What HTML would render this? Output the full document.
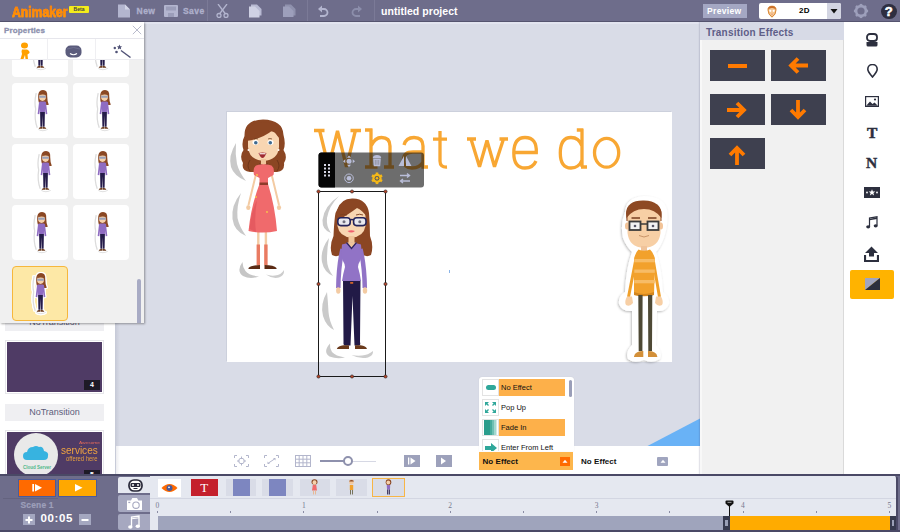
<!DOCTYPE html>
<html><head><meta charset="utf-8">
<style>
*{margin:0;padding:0;box-sizing:border-box}
html,body{width:900px;height:532px;overflow:hidden;background:#d9dce7;font-family:"Liberation Sans",sans-serif}
.a{position:absolute}
#top{left:0;top:0;width:900px;height:22px;background:#6e6d8b;border-bottom:1px solid #55546f}
.sep{position:absolute;top:0;width:1px;height:21px;background:#7b7a97}
.tb{color:#aeb0cb;font-weight:bold;font-size:9px;-webkit-text-stroke:0.3px #aeb0cb}
#side{left:0;top:22px;width:115px;height:452px;background:#fff}
.notr{position:absolute;left:5px;width:99px;height:17px;background:#efeff2;color:#5d5d7a;font-size:9px;text-align:center;line-height:17px}
#canvasbg{left:116px;top:22px;width:584px;height:425px;background:#d9dce7}
#stage{left:227px;top:112px;width:445px;height:250px;background:#fff;box-shadow:-1px -1px 0 #ccd0dc}
#toolbar{left:116px;top:446px;width:584px;height:28px;background:#fff}
#rpanel{left:700px;top:22px;width:144px;height:452px;background:#f1f1f1;border-right:1px solid #dadada;box-shadow:-1px 0 1px rgba(60,60,100,.14)}
#rhead{left:0;top:0;width:144px;height:18px;background:#d7dae6;color:#5f5e88;font-weight:bold;font-size:10px;line-height:18px;padding-top:1.5px;padding-left:6px;letter-spacing:0.2px}
.eff{position:absolute;width:55px;height:31px;background:#3e404f}
#ricons{left:844px;top:22px;width:56px;height:452px;background:#fff}
#tl{left:0;top:474px;width:900px;height:58px;background:#6e6d8b}
#props{left:0;top:22px;width:144px;height:301px;background:#f0f0f0;box-shadow:1px 1px 2px rgba(0,0,0,.35)}
.card{position:absolute;width:56px;height:55px;background:#fff;border-radius:4px}
</style></head><body>
<svg width="0" height="0" style="position:absolute"><defs>
<symbol id="sw" viewBox="0 0 18 40">
  <path d="M3 3 Q1 12 2.5 18 Q1 28 4 36" fill="none" stroke="#dcdcdc" stroke-width="1.2"/>
  <path d="M5 37.5 Q9 40 14 37.5" fill="none" stroke="#dedede" stroke-width="1"/>
  <path d="M5 4 Q6 0 9.5 0 Q14 0 13.5 6 Q13.5 11 15 14 Q12 15 11 13 L6 13 Q4.5 10 5 4Z" fill="#8a4723"/>
  <ellipse cx="9" cy="6.5" rx="3.3" ry="3.9" fill="#f6d1ab"/>
  <path d="M5.6 5 Q7 1.5 10 2 Q12.5 2.5 12.6 5.5 Q10 3.5 5.6 5Z" fill="#8a4723"/>
  <rect x="5.8" y="5.4" width="6.4" height="2" fill="#9aa0b8"/>
  <path d="M6.5 11.5 L5.2 23 M11.5 11.5 L12.8 23" stroke="#8f6cc2" stroke-width="1.6"/>
  <path d="M6.3 11 H11.7 L11.3 21 H6.7Z" fill="#8f6cc2"/>
  <path d="M6.7 21 H11.3 L11 35 H9.3 L9 24 L8.7 35 H7Z" fill="#251c4a"/>
  <path d="M5.5 36.5 Q6 35 8.8 35 V36.8 H5.5Z M12.5 36.5 Q12 35 9.2 35 V36.8 H12.5Z" fill="#6a3a1c"/>
</symbol>
</defs></svg>
<!-- TOP BAR -->
<div id="top" class="a">
  <div class="a" style="left:11.5px;top:3.5px;font-size:14px;font-weight:bold;transform:scaleX(0.87);transform-origin:0 0;background:linear-gradient(#ff7c00,#ff9200 60%,#ffa300);-webkit-background-clip:text;color:transparent;-webkit-text-stroke:0.6px #ff8a10;line-height:17px">Animaker</div>
  <div class="a" style="left:69px;top:6px;width:20px;height:7px;background:#f4ec1c;border-radius:1px;font-size:5px;font-weight:bold;color:#444;text-align:center;line-height:7px">Beta</div>
  <svg class="a" style="left:117px;top:4px" width="14" height="14" viewBox="0 0 14 14"><path d="M1 0.5 H8 L13 5.5 V13.5 H1 Z" fill="#b3b5cf"/><path d="M8 0.5 V5.5 H13" fill="#d2d4e6"/></svg>
  <div class="a tb" style="left:136.5px;top:5.5px;font-size:8.5px;letter-spacing:0.5px">New</div>
  <svg class="a" style="left:164px;top:5px" width="14" height="12" viewBox="0 0 14 12"><rect x="0" y="0" width="14" height="12" rx="1" fill="#b3b5cf"/><rect x="2" y="1.5" width="10" height="4" fill="#9b9db9"/><rect x="4" y="8" width="6" height="4" fill="#9b9db9"/></svg>
  <div class="a tb" style="left:183px;top:5.5px;font-size:8.5px;letter-spacing:0.45px">Save</div>
  <div class="sep" style="left:207px"></div>
  <svg class="a" style="left:216px;top:4px" width="13" height="14" viewBox="0 0 13 14"><g stroke="#b3b5cf" stroke-width="1.3" fill="none"><path d="M2 0 L9.5 10"/><path d="M11 0 L3.5 10"/><circle cx="3" cy="11.5" r="2"/><circle cx="10" cy="11.5" r="2"/></g></svg>
  <svg class="a" style="left:248px;top:4px" width="15" height="14" viewBox="0 0 15 14"><path d="M3 0.5 H9 L13.5 5 V11.5 H3 Z" fill="#b8bad3"/><path d="M1 2.5 H7 L11.5 7 V13.5 H1 Z" fill="#cfd1e4"/></svg>
  <svg class="a" style="left:282px;top:4px" width="14" height="14" viewBox="0 0 14 14"><path d="M3 0.5 H9 L13.5 5 V11.5 H3 Z" fill="#8f91ad"/><path d="M1 2.5 H7 L11.5 7 V13 H1 Z" fill="#9d9fbb"/></svg>
  <div class="sep" style="left:307px"></div>
  <svg class="a" style="left:318px;top:5px" width="11" height="13" viewBox="0 0 11 13"><g fill="none" stroke="#b3b5cf" stroke-width="1.8"><path d="M1.5 4 H6 A3.5 3.5 0 0 1 6 11 H2"/></g><path d="M0 4 L4 0.5 V7.5 Z" fill="#b3b5cf"/></svg>
  <svg class="a" style="left:351px;top:5px" width="11" height="13" viewBox="0 0 11 13"><g fill="none" stroke="#8c8eab" stroke-width="1.8"><path d="M9.5 4 H5 A3.5 3.5 0 0 0 5 11 H9"/></g><path d="M11 4 L7 0.5 V7.5 Z" fill="#8c8eab"/></svg>
  <div class="sep" style="left:374px"></div>
  <div class="a" style="left:381px;top:4.5px;font-size:10.5px;font-weight:bold;color:#fff;letter-spacing:0.05px">untitled project</div>
  <div class="a" style="left:703px;top:4px;width:44px;height:14px;background:#a4a7c3;color:#fff;font-weight:bold;font-size:8.5px;line-height:14px;padding-left:4px;letter-spacing:0.35px">Preview</div>
  <div class="a" style="left:759px;top:3px;width:82px;height:16px;background:#fff;border-radius:2px;overflow:hidden">
    <svg class="a" style="left:8px;top:2px" width="10" height="13" viewBox="0 0 10 13"><path d="M1 5 Q0.8 1.2 5 1.2 Q9.2 1.2 9 5 Q9 9.5 5 12.2 Q1 9.5 1 5Z" fill="#f5c692" stroke="#d9852f" stroke-width="1"/><path d="M1 4.5 Q1.5 1 5 1 Q8.5 1 9 4.5 Q7 2.8 5 3 Q3 2.8 1 4.5Z" fill="#c9702a"/><circle cx="3.3" cy="5.8" r="1.1" fill="#fff"/><circle cx="6.7" cy="5.8" r="1.1" fill="#fff"/><path d="M4 9 Q5 9.6 6 9" stroke="#e08a70" stroke-width="0.6" fill="none"/></svg>
    <div class="a" style="left:40px;top:3px;font-size:8px;font-weight:bold;color:#000;letter-spacing:0.3px">2D</div>
    <div class="a" style="left:68px;top:0;width:14px;height:16px;background:#d3d5e2"></div>
    <svg class="a" style="left:71px;top:5px" width="8" height="6"><path d="M0.5 1 H7.5 L4 5.5 Z" fill="#111"/></svg>
  </div>
  <svg class="a" style="left:853px;top:3px" width="16" height="16" viewBox="0 0 16 16"><g fill="#9d9fbb"><rect x="6.7" y="0.9" width="2.6" height="3" transform="rotate(0 8 8)"/><rect x="6.7" y="0.9" width="2.6" height="3" transform="rotate(45 8 8)"/><rect x="6.7" y="0.9" width="2.6" height="3" transform="rotate(90 8 8)"/><rect x="6.7" y="0.9" width="2.6" height="3" transform="rotate(135 8 8)"/><rect x="6.7" y="0.9" width="2.6" height="3" transform="rotate(180 8 8)"/><rect x="6.7" y="0.9" width="2.6" height="3" transform="rotate(225 8 8)"/><rect x="6.7" y="0.9" width="2.6" height="3" transform="rotate(270 8 8)"/><rect x="6.7" y="0.9" width="2.6" height="3" transform="rotate(315 8 8)"/></g><circle cx="8" cy="8" r="4.9" fill="none" stroke="#9d9fbb" stroke-width="2.6"/></svg>
  <div class="a" style="left:881px;top:3.5px;width:15.5px;height:15.5px;border-radius:50%;background:#2e2e40;color:#fff;font-weight:bold;font-size:13px;line-height:16px;text-align:center;-webkit-text-stroke:0.6px #fff">?</div>
</div>

<!-- SIDEBAR -->
<div id="side" class="a">
  <div class="notr" style="top:292px">NoTransition</div>
  <div class="a" style="left:5px;top:318px;width:99px;height:54px;background:#fff;border:1px solid #e6e6ea"></div>
  <div class="a" style="left:7px;top:320px;width:95px;height:50px;background:#4f3b65"></div>
  <div class="a" style="left:84px;top:358px;width:16px;height:10px;background:#1e1a26;color:#fff;font-size:7px;font-weight:bold;text-align:center;line-height:10px">4</div>
  <div class="notr" style="top:382px">NoTransition</div>
  <div class="a" style="left:5px;top:408px;width:99px;height:54px;background:#fff;border:1px solid #e6e6ea"></div>
  <div class="a" style="left:7px;top:409.5px;width:95px;height:50px;background:#4f3b65;overflow:hidden">
    <div class="a" style="left:7px;top:1px;width:44px;height:44px;border-radius:50%;background:#e9e9e9"></div>
    <svg class="a" style="left:16px;top:13px" width="26" height="16" viewBox="0 0 26 16"><path d="M4 15 Q0 15 0 11 Q0 7 4 7 Q5 2 10 2 Q13 0 16 2 Q20 1 21 6 Q26 7 25 11 Q25 15 21 15Z" fill="#37b3e0"/></svg>
    <div class="a" style="left:16px;top:33px;font-size:4.5px;font-weight:bold;color:#4fb88a;white-space:nowrap">Cloud Server</div>
    <div class="a" style="left:72px;top:8.5px;font-size:4px;color:#e66a5a;transform:scaleX(1.2);transform-origin:0 0">Awesome</div>
    <div class="a" style="left:54px;top:12.5px;font-size:11.5px;color:#f0a440;line-height:12px;transform:scaleX(0.87);transform-origin:0 0">services</div>
    <div class="a" style="left:59px;top:23.5px;font-size:6.5px;color:#e8a040;line-height:7px;transform:scaleX(0.9);transform-origin:0 0">offered here</div>
    <div class="a" style="left:77px;top:38px;width:16px;height:10px;background:#1e1a26;color:#fff;font-size:7px;font-weight:bold;text-align:center;line-height:10px">5</div>
  </div>
</div>

<div id="canvasbg" class="a"></div>
<div class="a" style="left:116px;top:22px;width:584px;height:2px;background:#e2e4ef"></div>
<div id="stage" class="a"></div>
<div id="toolbar" class="a">
  <svg class="a" style="left:118px;top:9px" width="15" height="12" viewBox="0 0 15 12"><g stroke="#b3b6cc" stroke-width="1" fill="none"><path d="M0.5 3 V0.5 H3 M12 0.5 H14.5 V3 M14.5 9 V11.5 H12 M3 11.5 H0.5 V9"/><circle cx="7.5" cy="6" r="2.8"/><path d="M7.5 1.5 V4 M7.5 8 V10.5 M3 6 H5.5 M9.5 6 H12"/></g></svg>
  <svg class="a" style="left:148px;top:9px" width="15" height="12" viewBox="0 0 15 12"><g stroke="#b3b6cc" stroke-width="1" fill="none"><path d="M0.5 3 V0.5 H3 M12 0.5 H14.5 V3 M14.5 9 V11.5 H12 M3 11.5 H0.5 V9"/><path d="M4.5 8 L10.5 4"/></g><path d="M9 3 H11.5 V5.5Z M6 9 H3.5 V6.5Z" fill="#b3b6cc"/></svg>
  <svg class="a" style="left:179px;top:9px" width="16" height="12" viewBox="0 0 16 12"><g stroke="#b3b6cc" stroke-width="1" fill="none"><rect x="0.5" y="0.5" width="15" height="11"/><path d="M0.5 4.2 H15.5 M0.5 7.8 H15.5 M4.2 0.5 V11.5 M8 0.5 V11.5 M11.8 0.5 V11.5"/></g></svg>
  <div class="a" style="left:204px;top:14px;width:27px;height:2px;background:#8e91ad"></div>
  <div class="a" style="left:231px;top:14.5px;width:29px;height:1px;background:#d6d8e4"></div>
  <div class="a" style="left:227px;top:9.5px;width:10px;height:10px;border-radius:50%;border:2.5px solid #8e91ad;background:#fff"></div>
  <div class="a" style="left:288px;top:8.5px;width:16px;height:12.5px;background:#9da1bb"></div>
  <svg class="a" style="left:291px;top:10px" width="10" height="10" viewBox="0 0 10 10"><rect x="1" y="1.5" width="1.3" height="7" fill="#fff"/><path d="M3.5 1.5 L8.5 5 L3.5 8.5Z" fill="#fff"/></svg>
  <div class="a" style="left:319.5px;top:8.5px;width:16px;height:12.5px;background:#9da1bb"></div>
  <svg class="a" style="left:322px;top:10px" width="10" height="10" viewBox="0 0 10 10"><path d="M3 1.5 L8 5 L3 8.5Z" fill="#fff"/></svg>
  <div class="a" style="left:363px;top:6px;width:94px;height:18px;background:#fdb64c"></div>
  <div class="a" style="left:366.5px;top:10.5px;font-size:8px;font-weight:bold;color:#111;letter-spacing:0.05px">No Effect</div>
  <div class="a" style="left:443.5px;top:11px;width:10.5px;height:8.5px;background:#ff6b00"></div>
  <svg class="a" style="left:445px;top:12px" width="8" height="6"><path d="M1.5 4.8 H6.5 L4 1.8Z" fill="#fff"/></svg>
  <div class="a" style="left:465px;top:10.5px;font-size:8px;font-weight:bold;color:#111;letter-spacing:0.05px">No Effect</div>
  <div class="a" style="left:541px;top:11px;width:10.5px;height:8.5px;background:#a0a5bf;border-radius:1px"></div>
  <svg class="a" style="left:542.5px;top:12px" width="8" height="6"><path d="M1.5 4.8 H6.5 L4 1.8Z" fill="#fff"/></svg>
</div>
<svg class="a" style="left:0;top:0" width="900" height="532" viewBox="0 0 900 532">
<defs>
  <filter id="stk" x="-20%" y="-20%" width="140%" height="140%"><feDropShadow dx="-0.8" dy="1" stdDeviation="0.9" flood-color="#000" flood-opacity="0.28"/></filter>
  <clipPath id="stclip"><rect x="116" y="22" width="584" height="424"/></clipPath>
</defs>
<g clip-path="url(#stclip)">
<!-- title -->
<g fill="none" stroke="#f8a733" stroke-width="3.3">
  <path stroke-linejoin="bevel" d="M319.5 130 L328.5 166.8 L337.5 131 L346.5 166.8 L355.5 130"/>
  <path d="M314 130.5 H324.5 M350.5 130.5 H361"/>
  <path d="M371 129 V167 M365 130 H372.5 M371 146 Q375 137.5 381.5 137.5 Q390 137.5 390 146 V167 M365 167 H377.5 M384 167 H394"/>
  <path d="M404 145 Q406 137.5 414 137.5 Q423 137.5 423 146 V167 H428 M423 152 H413 Q403.5 152 403.5 160 Q403.5 168 412 168 Q420 168 423 162"/>
  <path d="M440 131 V161 Q440 167.5 447 167 M433 139.2 H447"/>
  <path stroke-linejoin="bevel" d="M471 139 L479.5 166.8 L487 140.5 L494.5 166.8 L503.5 139 M467 139 H476 M499.5 139 H508"/>
  <path d="M514 152.5 H536.3 Q537 137.5 525 137.5 Q513.8 137.5 513.8 153 Q513.8 168 525 168 Q533 168 536 161"/>
  <path d="M582 146 Q579 137.5 571 137.5 Q560.3 137.5 560.3 153 Q560.3 168 571 168 Q579 168 582 160 M582 129 V167 M576.8 130 H583.4 M581 167 H587"/>
  <ellipse cx="606.6" cy="152.8" rx="12.1" ry="14.4"/>
</g>

<!-- woman 1 (red dress) -->
<g>
  <path d="M236 143 Q228 156 231 167 Q234 176 246 181 Q239 172 237 164 Q235 154 236 143Z" fill="#c9c9c9"/>
  <path d="M241 193 Q231 205 232.5 219 Q234 231 246 236 Q239 226 237.5 218 Q236.5 206 241 193Z" fill="#c9c9c9"/>
  <path d="M242.5 262 Q236 271 243 276 Q250 279.5 259 276.5 Q249 275.5 245.5 271 Q242.5 267 242.5 262Z" fill="#c6c6c6"/>
  <path d="M266 274.5 Q272 279 279 277.5 Q284.5 275.5 284 270 Q281 275 275 275.5 Q270 276 266 274.5Z" fill="#cdcdcd"/>
  <!-- hair back -->
  <path d="M244.5 136 Q244 120 263 119.5 Q283 120 283.5 135 Q286 144 283.5 150 Q288 157 284 163 Q285 171 277 172 L250 172 Q241 171 243 163 Q239 156 243.5 150 Q241 143 244.5 136Z" fill="#8b4623"/>
  <!-- face -->
  <path d="M248 139 Q248 131 263.5 130 Q279 131 279 139 L279 147 Q278 160 263.5 161 Q249 160 248 147Z" fill="#f8d6b2"/>
  <!-- bangs -->
  <path d="M246 141 Q245 124 262 122 Q279 122 282 136 L282 141 Q277 136 273 130 Q262 139 246 141Z" fill="#8b4623"/>
  <path d="M250 160 Q246 166 250 171 M277 160 Q281 166 277 171" stroke="#6e3519" stroke-width="1" fill="none"/>
  <ellipse cx="255.5" cy="142.5" rx="3" ry="2.4" fill="#fff"/>
  <ellipse cx="270.5" cy="142.5" rx="3" ry="2.4" fill="#fff"/>
  <circle cx="255.8" cy="142.7" r="1.8" fill="#3f6a8e"/>
  <circle cx="270.3" cy="142.7" r="1.8" fill="#3f6a8e"/>
  <path d="M254 139 Q256 138 258 139 M268 139 Q270 138 272 139" stroke="#6a3a1c" stroke-width="0.7" fill="none"/>
  <path d="M258.5 153 Q262.5 152 266.5 153 Q264.5 158 262.5 158 Q260.5 158 258.5 153Z" fill="#9e2a33"/>
  <path d="M259.5 153.2 H265.5 V154.3 H259.5Z" fill="#fff"/>
  <circle cx="248.5" cy="150" r="1" fill="#fff"/><circle cx="278.5" cy="150" r="1" fill="#fff"/>
  <rect x="261" y="159" width="5" height="7" fill="#efc59b"/>
  <path d="M259 164 Q263.5 167 268 164" stroke="#4a2a1a" stroke-width="0.8" fill="none"/>
  <!-- arms -->
  <path d="M256.5 172 L248.5 205 M271 172 L279 205" stroke="#f3cba3" stroke-width="2"/>
  <ellipse cx="248.3" cy="207.5" rx="2.1" ry="2.6" fill="#f3cba3"/><ellipse cx="279" cy="207.5" rx="2.1" ry="2.6" fill="#f3cba3"/>
  <!-- legs -->
  <path d="M258.3 230 V266 M265.9 230 V266" stroke="#f3cba3" stroke-width="2.4"/>
  <path d="M258.3 244.5 V265 M265.9 244.5 V265" stroke="#e97b62" stroke-width="3.4"/>
  <path d="M248.5 268 Q251 265 260 265 V269 H248.5Z M276.5 268 Q274 265 264.5 265 V269 H276.5Z" fill="#5b2b14"/>
  <!-- dress -->
  <path d="M256 165.5 Q263.5 163 271.5 165.5 Q275 168 273.5 175 L268 178 L268 184 Q275 206 277 231 Q263 234 248.5 231 Q251 206 259.5 184 L259.5 178 L254 175 Q252.5 168 256 165.5Z" fill="#f06a6c"/>
  <path d="M249.5 229 Q251 212 257 200 Q254 218 256 232Z" fill="#e55a60"/>
  <rect x="259.5" y="182.5" width="8.5" height="2.5" fill="#8e3b2b"/>
  <circle cx="257" cy="175" r="0.9" fill="#f8c84a"/><circle cx="256" cy="197" r="0.9" fill="#f8c84a"/><circle cx="267" cy="212" r="0.9" fill="#f8c84a"/>
</g>

<!-- woman 2 (selected, purple) -->
<g>
  <path d="M339 196 Q324 206 322.5 220 Q322 230 331 233 Q326 226 327 218 Q329 206 339 196Z" fill="#cacaca"/>
  <path d="M329 238 Q320 250 322 262 Q324 272 333 276 Q327 268 327 260 Q327 248 329 238Z" fill="#cacaca"/>
  <path d="M327 292 Q320 304 323 316 Q326 326 334 330 Q329 320 328.5 312 Q328 302 327 292Z" fill="#cacaca"/>
  <path d="M330 343.5 Q322.5 352 329.5 356.5 Q337 359.5 345 357.5 Q335.5 356 332 352 Q329.5 348 330 343.5Z" fill="#c9c9c9"/>
  <path d="M351.5 355 Q360 359.5 368 357.5 Q373.5 355.5 373 351 Q368 355 362 355.5 Q356.5 356 351.5 355Z" fill="#cdcdcd"/>
  <!-- hair -->
  <path d="M337 210 Q341 198 353 198.5 Q367 199 369 213 Q370 226 370 236 Q374 246 371 255 Q366 258 360 253 L344 253 Q337 258 332 255 Q329 246 333.5 236 Q334 224 335 216 Q335.5 212 337 210Z" fill="#8b4623"/>
  <path d="M337.5 216 Q338.5 207 351.5 207 Q364.5 207 365.5 216 L365.5 226 Q363.5 237 351.5 237.5 Q339.5 237 337.5 226Z" fill="#f8d6b2"/>
  <path d="M335.5 222 Q335 202 352 200.5 Q368 201 367 217 Q362 210 357 208 Q349 214 335.5 222Z" fill="#8b4623"/>
  <path d="M340 215 Q343.5 213.5 347 215 M356 215 Q359.5 213.5 363 215" stroke="#7a3f1e" stroke-width="0.9" fill="none"/>
  <rect x="337.8" y="217.8" width="12.4" height="7.8" rx="3" fill="#e9e9ef" stroke="#25245a" stroke-width="1.6"/>
  <rect x="353.6" y="217.8" width="12.4" height="7.8" rx="3" fill="#e9e9ef" stroke="#25245a" stroke-width="1.6"/>
  <path d="M350 220 Q352 219 353.6 220" stroke="#25245a" stroke-width="1.4" fill="none"/>
  <circle cx="344" cy="221.7" r="1.5" fill="#707080"/><circle cx="359.8" cy="221.7" r="1.5" fill="#707080"/>
  <path d="M347.5 231 Q351.3 229.5 355 231 Q351.3 234 347.5 231Z" fill="#ef5f6e"/>
  <rect x="348.5" y="236" width="6" height="8" fill="#efc59b"/>
  <!-- arms -->
  <path d="M342.5 249 Q338.5 266 338.3 288 M360.5 249 Q364.5 266 364.8 288" stroke="#9173c6" stroke-width="4.5" fill="none"/>
  <ellipse cx="338.3" cy="290.5" rx="2.2" ry="3.2" fill="#f3cba3"/><ellipse cx="365" cy="290.5" rx="2.2" ry="3.2" fill="#f3cba3"/>
  <!-- jeans -->
  <path d="M343 280 H360.5 L360 342 Q361 345.5 358.5 345.5 H354.5 L352.5 296 L350.5 345.5 H345.5 Q343 345.5 343.5 342Z" fill="#221a47"/>
  <path d="M336.8 349 Q338 346 343.5 345.3 H349 V349Z M367 349 Q366 346 360.5 345.3 H355 V349Z" fill="#6a3a1c"/>
  <!-- sweater -->
  <path d="M342 244.5 Q351.5 241 361 244.5 Q362 254 360.5 260 Q358 264 358 267 Q360 274 361 281 H342 Q343 274 345 267 Q345 264 342.5 260 Q341 254 342 244.5Z" fill="#9173c6"/>
  <path d="M346.5 242.5 L351.5 248.5 L356.5 242.5" stroke="#2f2563" stroke-width="1.3" fill="#efc59b"/>
  <rect x="350.2" y="282" width="3" height="1.8" fill="#d0632a"/>
</g>

<!-- man -->
<g>
  <path filter="url(#stk)" d="M625 212 Q626 197 644 196 Q664 196 667 210 Q669 222 664 238 Q660 248 656 252 Q662 268 663 292 Q670 296 669 304 Q666 312 657 311 L656 345 Q663 352 660 359 Q652 364 644 360 Q634 364 628 359 Q625 352 632 345 L632 311 Q622 312 619 304 Q618 296 625 292 Q626 268 632 252 Q626 246 623 238 Q620 224 625 212Z" fill="#fff"/>
    <path d="M626 213 Q627 200 644 200.5 Q661 201 661.5 214 L661.5 221 L626.5 221Z" fill="#8e4a24"/>
  <path d="M627.5 214 Q629 206 644 206 Q659 206 660.5 214 L660.5 233 Q659 247 644 248 Q629 247 627.5 233Z" fill="#f7cfa5"/>
  <path d="M626.5 211 Q631 202 644 202 Q659 202 661.5 212 L661.5 218 Q655 209 644 209 Q633 209 626.5 218Z" fill="#8e4a24"/>
  <ellipse cx="627" cy="226" rx="2" ry="3.5" fill="#f2c397"/><ellipse cx="661" cy="226" rx="2" ry="3.5" fill="#f2c397"/>
  <path d="M631.5 218 H640 M648 218 H656.5" stroke="#7a4020" stroke-width="1.7"/>
  <rect x="629.5" y="221.5" width="11" height="8.5" fill="#f2f2f2" stroke="#3b3b3b" stroke-width="1.8"/>
  <rect x="647.5" y="221.5" width="11" height="8.5" fill="#f2f2f2" stroke="#3b3b3b" stroke-width="1.8"/>
  <path d="M640.5 224 H647.5" stroke="#3b3b3b" stroke-width="1.5"/>
  <circle cx="635" cy="226" r="1.3" fill="#556"/><circle cx="653" cy="226" r="1.3" fill="#556"/>
  <path d="M639 235.5 Q644 238.5 649 235.5" stroke="#c9956a" stroke-width="1" fill="none"/>
  <rect x="641" y="246" width="6" height="5" fill="#f0c39a"/>
  <path d="M636.5 256 L628.5 297 M652.5 256 L659.5 297" stroke="#f0a02a" stroke-width="3"/>
  <path d="M627 296.5 Q624 302 626 305 Q630 307 633 303 L632 296.5Z M661 296.5 Q664 302 662 305 Q658 307 655 303 L656 296.5Z" fill="#f7cfa5"/>
  <path d="M638.5 249.5 Q644 252 650 249.5 Q655 254 655 262 L654 295 Q644 297 634 295 L634 262 Q634 254 638.5 249.5Z" fill="#f2a12c"/>
  <rect x="634.3" y="259" width="20.5" height="3.3" fill="#f7bc66"/>
  <rect x="634.3" y="269.5" width="20.5" height="3.3" fill="#f7bc66"/>
  <rect x="634.3" y="280" width="20.5" height="3.3" fill="#f7bc66"/>
  <path d="M634 292 Q644 296 654 292 L654 295 Q644 297.5 634 295Z" fill="#d4861e"/>
  <path d="M638.3 295 H642.6 L642.4 351 H638.7Z M648 295 H652.3 L652 351 H648.3Z" fill="#4e4935"/>
  <path d="M634 356.5 Q635 351 643.3 351 V357 H634Z M657.3 356.5 Q656.5 351 648 351 V357 H657.3Z" fill="#d39039"/>
</g>

<path d="M647.5 446 L700 418.5 V446Z" fill="#69b2f6"/>
<!-- small dot -->
<rect x="449" y="270" width="1" height="3" fill="#8ab4e8"/>

<!-- selection box -->
<rect x="318.5" y="191.5" width="67" height="185" fill="none" stroke="#1a1a1a" stroke-width="1"/>
<g fill="#b5452a" stroke="#222" stroke-width="0.6">
  <circle cx="318.5" cy="191.5" r="1.6"/><circle cx="352" cy="191.5" r="1.6"/><circle cx="385.5" cy="191.5" r="1.6"/>
  <circle cx="318.5" cy="284" r="1.6"/><circle cx="385.5" cy="284" r="1.6"/>
  <circle cx="318.5" cy="376.5" r="1.6"/><circle cx="352" cy="376.5" r="1.6"/><circle cx="385.5" cy="376.5" r="1.6"/>
</g>

<!-- floating toolbar -->
<rect x="318.5" y="152.5" width="105.5" height="35" rx="3" fill="rgba(20,20,20,0.62)"/>
<path d="M321.5 152.5 H335 V187.5 H321.5 Q318.5 187.5 318.5 184.5 V155.5 Q318.5 152.5 321.5 152.5Z" fill="#050505"/>
<g fill="#d8d8e6">
  <rect x="324" y="164" width="2" height="2"/><rect x="328" y="164" width="2" height="2"/>
  <rect x="324" y="167.5" width="2" height="2"/><rect x="328" y="167.5" width="2" height="2"/>
  <rect x="324" y="171" width="2" height="2"/><rect x="328" y="171" width="2" height="2"/>
  <rect x="324" y="174.5" width="2" height="2"/><rect x="328" y="174.5" width="2" height="2"/>
</g>
<g fill="#b9bdd8">
  <circle cx="349" cy="161.3" r="2.5"/>
  <path d="M349 155.5 L351 157.8 H347Z M349 167 L351 164.8 H347Z M343 161.3 L345.3 159.3 V163.3Z M355 161.3 L352.7 159.3 V163.3Z"/>
  <path d="M373.2 158.6 H380.8 L380.2 166.3 H373.8Z"/><path d="M372.8 158 Q373 155 377 155 Q381 155 381.2 158Z"/><path d="M375.3 160 V164.8 M377 160 V164.8 M378.7 160 V164.8" stroke="#7a7a80" stroke-width="0.6"/>
  <path d="M404 156 V166 H398.5Z M406 156 V166 H411.5Z"/>
  <circle cx="349" cy="178.3" r="4.3" fill="none" stroke="#b9bdd8" stroke-width="1"/><circle cx="349" cy="178.3" r="2.3"/>
  <path d="M400 175.5 H409 M407 173.5 L409.5 175.5 L407 177.5 M410 181 H401 M403 179 L400.5 181 L403 183" stroke="#b9bdd8" stroke-width="1.4" fill="none"/>
</g>
<g transform="translate(377 178.3)">
  <circle r="4.6" fill="#f5b818"/>
  <g fill="#f5b818"><rect x="-1.3" y="-5.8" width="2.6" height="11.6"/><rect x="-1.3" y="-5.8" width="2.6" height="11.6" transform="rotate(60)"/><rect x="-1.3" y="-5.8" width="2.6" height="11.6" transform="rotate(120)"/></g>
  <circle r="2.4" fill="#5a5a5a"/><circle r="1.3" fill="#f5b818"/>
</g>

<!-- dropdown list -->
</g>
</svg>


<div class="a" style="left:479px;top:376.5px;width:95px;height:74.5px;overflow:hidden;background:#fff;border-radius:3px 3px 0 0;box-shadow:0 0 1px rgba(0,0,0,.15)">
  <div class="a" style="left:3px;top:2.5px;width:16.5px;height:16.5px;border:1px solid #e3e3e3;background:#fff"></div>
  <div class="a" style="left:6.5px;top:8.5px;width:10px;height:4.5px;border-radius:2.5px;background:#2fa79a"></div>
  <div class="a" style="left:19.5px;top:2.5px;width:66px;height:16.5px;background:#fdb04a"></div>
  <div class="a" style="left:22px;top:6px;font-size:7.5px;color:#111">No Effect</div>
  <div class="a" style="left:3px;top:22.5px;width:16.5px;height:16.5px;border:1px solid #e3e3e3;background:#fff"></div>
  <svg class="a" style="left:6px;top:25.5px" width="11" height="11" viewBox="0 0 11 11"><g fill="#2fa79a"><path d="M0 0 H4 L0 4Z M11 0 V4 L7 0Z M0 11 V7 L4 11Z M11 11 H7 L11 7Z"/></g><path d="M1.5 1.5 L3.5 3.5 M9.5 1.5 L7.5 3.5 M1.5 9.5 L3.5 7.5 M9.5 9.5 L7.5 7.5" stroke="#2fa79a" stroke-width="1.3"/></svg>
  <div class="a" style="left:22px;top:26px;font-size:7.5px;color:#111">Pop Up</div>
  <div class="a" style="left:3px;top:42.5px;width:16.5px;height:16.5px;border:1px solid #e3e3e3;background:linear-gradient(90deg,#fff 0,#fff 8%,#2a9d8c 8%,#2a9d8c 45%,#45ab9c 45%,#45ab9c 60%,#6fc0b4 60%,#6fc0b4 72%,#a3d8cf 72%,#a3d8cf 84%,#d2ece8 84%,#d2ece8 92%,#fff 92%)"></div>
  <div class="a" style="left:19.5px;top:42.5px;width:66px;height:16.5px;background:#fdb04a"></div>
  <div class="a" style="left:22px;top:46px;font-size:7.5px;color:#111">Fade In</div>
  <div class="a" style="left:3px;top:62.5px;width:16.5px;height:16.5px;border:1px solid #e3e3e3;background:#fff"></div>
  <svg class="a" style="left:5.5px;top:66px" width="12" height="10" viewBox="0 0 12 10"><path d="M0 3 H6 V0 L12 5 L6 10 V7 H0Z" fill="#2fa79a"/></svg>
  <div class="a" style="left:22px;top:66px;font-size:7.5px;color:#111;white-space:nowrap">Enter From Left</div>
  <div class="a" style="left:89.5px;top:3px;width:3px;height:17px;border-radius:1.5px;background:#9a9eb8"></div>
</div>
<div class="a" style="left:115px;top:22px;width:5px;height:452px;background:linear-gradient(90deg,rgba(40,45,80,0.11),rgba(40,45,80,0))"></div>
<div id="rpanel" class="a">
  <div class="a" style="left:0;top:18px;width:2px;height:434px;background:#f8f8f8"></div>
  <div id="rhead" class="a">Transition Effects</div>
  <div class="eff" style="left:9.7px;top:28px"><svg class="a" style="left:18px;top:13px" width="20" height="6"><rect x="0" y="1" width="19" height="4" fill="#ff7a00"/></svg></div>
  <div class="eff" style="left:70.5px;top:28px"><svg class="a" style="left:17px;top:6px" width="21" height="19" viewBox="0 0 21 19"><path d="M20 9.5 H4 M10 2.5 L3 9.5 L10 16.5" stroke="#ff7a00" stroke-width="3.8" fill="none"/></svg></div>
  <div class="eff" style="left:9.7px;top:72px"><svg class="a" style="left:17px;top:7px" width="21" height="19" viewBox="0 0 21 19"><path d="M0 9 H16 M10 2 L17 9 L10 16" stroke="#ff7a00" stroke-width="3.8" fill="none"/></svg></div>
  <div class="eff" style="left:70.5px;top:72px"><svg class="a" style="left:18px;top:6px" width="19" height="21" viewBox="0 0 19 21"><path d="M9 0 V16 M2 10 L9 17 L16 10" stroke="#ff7a00" stroke-width="3.8" fill="none"/></svg></div>
  <div class="eff" style="left:9.7px;top:116px"><svg class="a" style="left:18px;top:6px" width="19" height="21" viewBox="0 0 19 21"><path d="M9 21 V5 M2 11 L9 4 L16 11" stroke="#ff7a00" stroke-width="3.8" fill="none"/></svg></div>
</div>
<div id="ricons" class="a">
  <svg class="a" style="left:22px;top:11px" width="12" height="14" viewBox="0 0 12 14"><rect x="1" y="1" width="10" height="7" rx="3" fill="none" stroke="#2c2f3e" stroke-width="1.8"/><path d="M0.5 9 H11.5 V12 Q11.5 13.5 10 13.5 H2 Q0.5 13.5 0.5 12Z" fill="#2c2f3e"/></svg>
  <svg class="a" style="left:23px;top:42px" width="11" height="14" viewBox="0 0 11 14"><path d="M5.5 13 Q0.8 7.5 0.8 5.2 A4.7 4.7 0 0 1 10.2 5.2 Q10.2 7.5 5.5 13Z" fill="none" stroke="#2c2f3e" stroke-width="1.6"/></svg>
  <svg class="a" style="left:21px;top:74px" width="14" height="11" viewBox="0 0 14 11"><rect x="0" y="0" width="14" height="11" fill="#2c2f3e"/><rect x="1.2" y="1.2" width="11.6" height="8.6" fill="#fff"/><path d="M1.2 9.8 L5 5.5 L7.5 8 L9.5 6.5 L12.8 9.8Z" fill="#2c2f3e"/><circle cx="10" cy="3.5" r="1.1" fill="#2c2f3e"/></svg>
  <div class="a" style="left:23px;top:103px;font-family:'Liberation Serif',serif;font-weight:bold;font-size:15.5px;-webkit-text-stroke:0.5px #2c2f3e;color:#2c2f3e;line-height:16px">T</div>
  <div class="a" style="left:22px;top:132.5px;font-family:'Liberation Serif',serif;font-weight:bold;font-size:15.5px;-webkit-text-stroke:0.4px #2c2f3e;color:#2c2f3e;line-height:16px">N</div>
  <svg class="a" style="left:20px;top:165px" width="16" height="11" viewBox="0 0 16 11"><rect x="0" y="0" width="16" height="11" fill="#2c2f3e"/><path d="M8 2.2 L8.9 4.5 L11.3 4.6 L9.4 6.1 L10.1 8.4 L8 7.1 L5.9 8.4 L6.6 6.1 L4.7 4.6 L7.1 4.5Z" fill="#fff"/><circle cx="3" cy="5.5" r="0.9" fill="#fff"/><circle cx="13" cy="5.5" r="0.9" fill="#fff"/></svg>
  <svg class="a" style="left:22px;top:194px" width="12" height="13" viewBox="0 0 12 13"><path d="M3.5 10.5 V2 L11 0.8 V9.5" stroke="#2c2f3e" stroke-width="1.2" fill="none"/><path d="M3.5 3.5 L11 2.3" stroke="#2c2f3e" stroke-width="1.6"/><ellipse cx="2.2" cy="10.8" rx="2" ry="1.6" fill="#2c2f3e"/><ellipse cx="9.7" cy="9.8" rx="2" ry="1.6" fill="#2c2f3e"/></svg>
  <svg class="a" style="left:20px;top:224px" width="15" height="16" viewBox="0 0 15 16"><path d="M7.5 0.5 L14 7 H10 V10.5 H5 V7 H1Z" fill="#2c2f3e"/><path d="M1 9 V15 H14 V9" stroke="#2c2f3e" stroke-width="2.2" fill="none"/></svg>
  <div class="a" style="left:6px;top:248px;width:44px;height:29px;background:#ffb300;border-radius:2px"></div>
  <svg class="a" style="left:21px;top:256px" width="15" height="12" viewBox="0 0 15 12"><path d="M0 0 H15 L0 12Z" fill="#a1a5bf"/><path d="M15 0 V12 H0Z" fill="#2c2f3e"/></svg>
</div>
<div id="tl" class="a">
  <div class="a" style="left:0;top:0;width:900px;height:1.5px;background:#4a4966"></div>
  <div class="a" style="left:17.5px;top:4.5px;width:38.5px;height:18px;background:#ff6a00;border:1px solid #4d5b98"></div>
  <svg class="a" style="left:32px;top:9.5px" width="11" height="8" viewBox="0 0 11 8"><rect x="0.3" y="0" width="1.7" height="7.5" fill="#fff"/><path d="M3 0 L10 3.75 L3 7.5Z" fill="#fff"/></svg>
  <div class="a" style="left:57.5px;top:4.5px;width:39px;height:18px;background:#ffa800;border:1px solid #4d5b98"></div>
  <svg class="a" style="left:74.5px;top:9.5px" width="8" height="8" viewBox="0 0 8 8"><path d="M0 0 L7.5 3.75 L0 7.5Z" fill="#fff"/></svg>
  <div class="a" style="left:3px;top:24px;width:55px;height:1px;background:#64637f"></div>
  <div class="a" style="left:20.5px;top:25.5px;font-size:8.5px;font-weight:bold;color:#9d9fba;letter-spacing:0.15px;-webkit-text-stroke:0.2px #9d9fba">Scene 1</div>
  <div class="a" style="left:23px;top:39.5px;width:12px;height:11.5px;background:#a4a7c0"></div>
  <svg class="a" style="left:24px;top:40.5px" width="10" height="10" viewBox="0 0 10 10"><path d="M5 1.5 V8.5 M1.5 5 H8.5" stroke="#fff" stroke-width="2"/></svg>
  <div class="a" style="left:40.5px;top:37.5px;font-size:11.5px;font-weight:bold;color:#fff;letter-spacing:0.6px">00:05</div>
  <div class="a" style="left:79px;top:39.5px;width:12px;height:11.5px;background:#a4a7c0"></div>
  <svg class="a" style="left:80px;top:40.5px" width="10" height="10" viewBox="0 0 10 10"><path d="M1.5 5 H8.5" stroke="#fff" stroke-width="2"/></svg>
  <!-- right area -->
  <div class="a" style="left:117px;top:1.5px;width:781px;height:55px;background:#e5e8f0;border-radius:0 3px 0 0;border-right:2px solid #4a4966"></div>
  <div class="a" style="left:117px;top:1.5px;width:33px;height:55px;background:#6e6d8b"></div>
  <div class="a" style="left:118px;top:3px;width:34px;height:16px;background:#e5e8f0;border-radius:2px 0 0 0"></div>
  <div class="a" style="left:118px;top:21px;width:32px;height:16.5px;background:#a6a8c0;border-radius:2px 0 0 2px"></div>
  <div class="a" style="left:118px;top:39.5px;width:32px;height:16.5px;background:#a6a8c0;border-radius:2px 0 0 2px"></div>
  <svg class="a" style="left:127.5px;top:4.5px" width="15" height="13" viewBox="0 0 15 13"><rect x="1" y="1" width="13" height="11" rx="5" fill="#fff" stroke="#2a2a3a" stroke-width="1.7"/><rect x="2.5" y="4" width="10" height="4" rx="1" fill="#2a2a3a"/><circle cx="5" cy="6" r="1" fill="#fff"/><circle cx="10" cy="6" r="1" fill="#fff"/><path d="M5.5 9.5 H9.5" stroke="#2a2a3a" stroke-width="1"/></svg>
  <svg class="a" style="left:126px;top:22.5px" width="17" height="14" viewBox="0 0 17 14"><path d="M1 3.5 H5 L6.3 1 H11 L12.3 3.5 H16 V13 H1Z" fill="#fff"/><circle cx="10" cy="8.2" r="3.2" fill="none" stroke="#a6a8c0" stroke-width="1.1"/><rect x="2.3" y="4.8" width="2" height="1.3" fill="#a6a8c0"/></svg>
  <svg class="a" style="left:128px;top:41px" width="12" height="14" viewBox="0 0 12 14"><path d="M3.5 12 V2 L11 1 V11" stroke="#fff" stroke-width="1.3" fill="none"/><path d="M3.5 3.8 L11 2.8" stroke="#fff" stroke-width="1"/><ellipse cx="2.3" cy="12" rx="2.2" ry="1.8" fill="#fff"/><ellipse cx="9.8" cy="11.2" rx="2.2" ry="1.8" fill="#fff"/></svg>
  <!-- element thumbs row -->
  <div class="a" style="left:158px;top:4.5px;width:23px;height:18px;background:#fff"></div>
  <svg class="a" style="left:161px;top:8.5px" width="17" height="10" viewBox="0 0 17 10"><path d="M0.5 5 Q8.5 -3 16.5 5 Q8.5 13 0.5 5Z" fill="#ff6a00"/><circle cx="8.5" cy="5" r="3" fill="#4a5a9a"/><circle cx="8" cy="4.3" r="0.9" fill="#fff"/></svg>
  <div class="a" style="left:190.5px;top:5px;width:27.5px;height:17px;background:#c4202c"></div>
  <div class="a" style="left:190.5px;top:5px;width:27.5px;height:17px;font-family:'Liberation Serif',serif;font-size:13px;color:#fff;text-align:center;line-height:17px">T</div>
  <div class="a" style="left:225.5px;top:4.5px;width:30.5px;height:17.5px;background:#d9dce7"></div>
  <div class="a" style="left:233px;top:4.5px;width:16.5px;height:17.5px;background:#7d86c0"></div>
  <div class="a" style="left:262px;top:4.5px;width:31px;height:17.5px;background:#d9dce7"></div>
  <div class="a" style="left:269px;top:4.5px;width:17px;height:17.5px;background:#7d86c0"></div>
  <div class="a" style="left:299.5px;top:4.5px;width:30px;height:17.5px;background:#d9dce7"></div>
  <svg class="a" style="left:310px;top:5px" width="9" height="17" viewBox="0 0 9 17"><ellipse cx="4.5" cy="3" rx="3" ry="2.8" fill="#8a4723"/><ellipse cx="4.5" cy="3.5" rx="2" ry="2.2" fill="#f6d1ab"/><path d="M2.8 6 H6.2 L7 11.5 H2Z" fill="#f06b6d"/><path d="M3.5 11.5 V15.5 M5.5 11.5 V15.5" stroke="#e9b48c" stroke-width="0.9"/></svg>
  <div class="a" style="left:336px;top:4.5px;width:30.5px;height:17.5px;background:#d9dce7"></div>
  <svg class="a" style="left:347px;top:5px" width="9" height="17" viewBox="0 0 9 17"><ellipse cx="4.5" cy="3" rx="2.3" ry="2.6" fill="#f3c89d"/><path d="M2.3 1.8 Q4.5 0 6.7 1.8 V2.5 H2.3Z" fill="#8e4a24"/><path d="M2.8 6 H6.2 V11 H2.8Z" fill="#f2a12c"/><path d="M3.5 11 V15.5 M5.5 11 V15.5" stroke="#6b6549" stroke-width="0.9"/></svg>
  <div class="a" style="left:371.5px;top:4px;width:33px;height:19px;background:#d9dce7;border:1.3px solid #f7b546"></div>
  <svg class="a" style="left:383.5px;top:5px" width="9" height="17" viewBox="0 0 9 17"><ellipse cx="4.5" cy="3.2" rx="2.8" ry="3" fill="#8a4723"/><ellipse cx="4.3" cy="3.5" rx="1.9" ry="2.1" fill="#f6d1ab"/><path d="M2.8 6 H6.2 L6 10.5 H3Z" fill="#8f6cc2"/><path d="M3.7 10.5 V15.5 M5.3 10.5 V15.5" stroke="#251c4a" stroke-width="1"/></svg>
  <!-- ruler -->
  <div class="a" style="left:150px;top:24px;width:746px;height:1px;background:#d3d6e2"></div>
  <div class="a" style="left:155.5px;top:26.5px;font-size:7.5px;color:#76788f;font-family:'Liberation Serif',serif">0</div>
  <div class="a" style="left:157.0px;top:37px;width:1px;height:2px;background:#8a8ca4"></div>
  <div class="a" style="left:230.2px;top:37px;width:1px;height:2px;background:#8a8ca4"></div>
  <div class="a" style="left:301.9px;top:26.5px;font-size:7.5px;color:#76788f;font-family:'Liberation Serif',serif">1</div>
  <div class="a" style="left:303.4px;top:37px;width:1px;height:2px;background:#8a8ca4"></div>
  <div class="a" style="left:376.6px;top:37px;width:1px;height:2px;background:#8a8ca4"></div>
  <div class="a" style="left:448.3px;top:26.5px;font-size:7.5px;color:#76788f;font-family:'Liberation Serif',serif">2</div>
  <div class="a" style="left:449.8px;top:37px;width:1px;height:2px;background:#8a8ca4"></div>
  <div class="a" style="left:523.0px;top:37px;width:1px;height:2px;background:#8a8ca4"></div>
  <div class="a" style="left:594.7px;top:26.5px;font-size:7.5px;color:#76788f;font-family:'Liberation Serif',serif">3</div>
  <div class="a" style="left:596.2px;top:37px;width:1px;height:2px;background:#8a8ca4"></div>
  <div class="a" style="left:669.4px;top:37px;width:1px;height:2px;background:#8a8ca4"></div>
  <div class="a" style="left:741.1px;top:26.5px;font-size:7.5px;color:#76788f;font-family:'Liberation Serif',serif">4</div>
  <div class="a" style="left:742.6px;top:37px;width:1px;height:2px;background:#8a8ca4"></div>
  <div class="a" style="left:815.8px;top:37px;width:1px;height:2px;background:#8a8ca4"></div>
  <div class="a" style="left:887.5px;top:26.5px;font-size:7.5px;color:#76788f;font-family:'Liberation Serif',serif">5</div>
  <div class="a" style="left:889.0px;top:37px;width:1px;height:2px;background:#8a8ca4"></div>
  <!-- track -->
  <div class="a" style="left:158px;top:42px;width:566px;height:13.5px;background:#9fa4bc"></div>
  <div class="a" style="left:723px;top:42px;width:6.5px;height:13.5px;background:#363a4e"></div>
  <div class="a" style="left:725px;top:45.5px;width:2.5px;height:6px;background:#9aa0b6"></div>
  <div class="a" style="left:729.5px;top:42px;width:161px;height:13.5px;background:#ffab00"></div>
  <div class="a" style="left:890px;top:42px;width:6px;height:13.5px;background:#363a4e"></div>
  <div class="a" style="left:891.8px;top:45.5px;width:2.5px;height:6px;background:#9aa0b6"></div>
  <div class="a" style="left:728.5px;top:30px;width:1px;height:12px;background:#111"></div>
  <svg class="a" style="left:724.5px;top:25.5px" width="9" height="8" viewBox="0 0 9 8"><path d="M0.5 1.5 Q0.5 0.5 1.5 0.5 H7.5 Q8.5 0.5 8.5 1.5 V3.5 L4.5 7 L0.5 3.5Z" fill="#111"/><rect x="2.5" y="1.8" width="4" height="1.2" fill="#888"/></svg>
  <div class="a" style="left:0;top:56px;width:900px;height:2px;background:#4a4966"></div>
</div>


<div id="props" class="a">
  <div class="a" style="left:0;top:0;width:144px;height:17px;background:#fff;border-bottom:1px solid #e6e6ec"></div>
  <div class="a" style="left:4px;top:3.5px;font-size:8px;font-weight:bold;color:#8d90ae;letter-spacing:0.15px;-webkit-text-stroke:0.3px #8d90ae">Properties</div>
  <svg class="a" style="left:132px;top:3px" width="10" height="10" viewBox="0 0 10 10"><path d="M0.8 0.8 L9.2 9.2 M9.2 0.8 L0.8 9.2" stroke="#b9bbcc" stroke-width="1"/></svg>
  <div class="a" style="left:0;top:17px;width:144px;height:21px;background:#fff;border-bottom:1px solid #ececf0"></div>
  <div class="a" style="left:46.5px;top:17px;width:1px;height:21px;background:#efeff2"></div>
  <div class="a" style="left:94.5px;top:17px;width:1px;height:21px;background:#efeff2"></div>
  <svg class="a" style="left:19px;top:20px" width="12" height="18" viewBox="0 0 12 18"><ellipse cx="5.5" cy="3.5" rx="3.5" ry="3" fill="#ffa000"/><path d="M3 7.5 H8 Q11 9 10.5 11 L8.5 12.5 L9 17 H6.5 L6 13 L4.5 17 H1.5 L3 12 Q2 9 3 7.5Z" fill="#ffa000"/></svg>
  <svg class="a" style="left:65px;top:23px" width="17" height="13" viewBox="0 0 17 13"><rect x="0.5" y="0.5" width="16" height="12" rx="5" fill="#5b5c7c"/><path d="M5 8.5 Q8.5 11 12 8.5" stroke="#fff" stroke-width="1.2" fill="none"/><path d="M2 4 Q8.5 1 15 4" stroke="#6f7090" stroke-width="1" fill="none"/></svg>
  <svg class="a" style="left:113px;top:22px" width="19" height="14" viewBox="0 0 19 14"><path d="M8 6.5 L17.5 13.5" stroke="#505276" stroke-width="1.4"/><path d="M6.5 0.5 L7.3 2.3 L9.2 2.4 L7.8 3.6 L8.2 5.5 L6.5 4.5 L4.8 5.5 L5.2 3.6 L3.8 2.4 L5.7 2.3Z" fill="#505276"/><circle cx="1.8" cy="4" r="1.2" fill="#505276"/><circle cx="3.5" cy="8" r="1.3" fill="#505276"/></svg>
  <div class="a" style="left:0;top:38px;width:144px;height:263px;overflow:hidden;background:#f0f0f0">
    <div class="card" style="left:12px;top:-38px"></div>
    <div class="card" style="left:73px;top:-38px"></div>
    <div class="card" style="left:12px;top:23px"></div>
    <div class="card" style="left:73px;top:23px"></div>
    <div class="card" style="left:12px;top:84px"></div>
    <div class="card" style="left:73px;top:84px"></div>
    <div class="card" style="left:12px;top:145px"></div>
    <div class="card" style="left:73px;top:145px"></div>
    <div class="card" style="left:12px;top:206px;background:#fde8a6;border:1.5px solid #f6b73c"></div>
    <div class="a" style="left:137px;top:218.5px;width:4px;height:44px;background:#a8abc4;border-radius:2px 2px 0 0"></div>
    <svg class="a" style="left:31px;top:-31px;filter:drop-shadow(1px 0 0 #fff) drop-shadow(-1px 0 0 #fff) drop-shadow(0 1px 0 #fff) drop-shadow(0 -1px 0 #fff)" width="19" height="42"><use href="#sw"/></svg>
    <svg class="a" style="left:93px;top:-31px;filter:drop-shadow(1px 0 0 #fff) drop-shadow(-1px 0 0 #fff) drop-shadow(0 1px 0 #fff) drop-shadow(0 -1px 0 #fff)" width="19" height="42"><use href="#sw"/></svg>
    <svg class="a" style="left:33px;top:30px;filter:drop-shadow(1px 0 0 #fff) drop-shadow(-1px 0 0 #fff) drop-shadow(0 1px 0 #fff) drop-shadow(0 -1px 0 #fff)" width="19" height="42"><use href="#sw"/></svg>
    <svg class="a" style="left:95px;top:30px;filter:drop-shadow(1px 0 0 #fff) drop-shadow(-1px 0 0 #fff) drop-shadow(0 1px 0 #fff) drop-shadow(0 -1px 0 #fff)" width="19" height="42"><use href="#sw"/></svg>
    <svg class="a" style="left:36px;top:91px;filter:drop-shadow(1px 0 0 #fff) drop-shadow(-1px 0 0 #fff) drop-shadow(0 1px 0 #fff) drop-shadow(0 -1px 0 #fff)" width="19" height="42"><use href="#sw"/></svg>
    <svg class="a" style="left:93px;top:91px;filter:drop-shadow(1px 0 0 #fff) drop-shadow(-1px 0 0 #fff) drop-shadow(0 1px 0 #fff) drop-shadow(0 -1px 0 #fff)" width="19" height="42"><use href="#sw"/></svg>
    <svg class="a" style="left:32px;top:152px;filter:drop-shadow(1px 0 0 #fff) drop-shadow(-1px 0 0 #fff) drop-shadow(0 1px 0 #fff) drop-shadow(0 -1px 0 #fff)" width="19" height="42"><use href="#sw"/></svg>
    <svg class="a" style="left:93px;top:152px;filter:drop-shadow(1px 0 0 #fff) drop-shadow(-1px 0 0 #fff) drop-shadow(0 1px 0 #fff) drop-shadow(0 -1px 0 #fff)" width="19" height="42"><use href="#sw"/></svg>
    <svg class="a" style="left:31px;top:213px;filter:drop-shadow(1px 0 0 #fff) drop-shadow(-1px 0 0 #fff) drop-shadow(0 1px 0 #fff) drop-shadow(0 -1px 0 #fff)" width="19" height="42"><use href="#sw"/></svg>
  </div>
</div>
</body></html>
